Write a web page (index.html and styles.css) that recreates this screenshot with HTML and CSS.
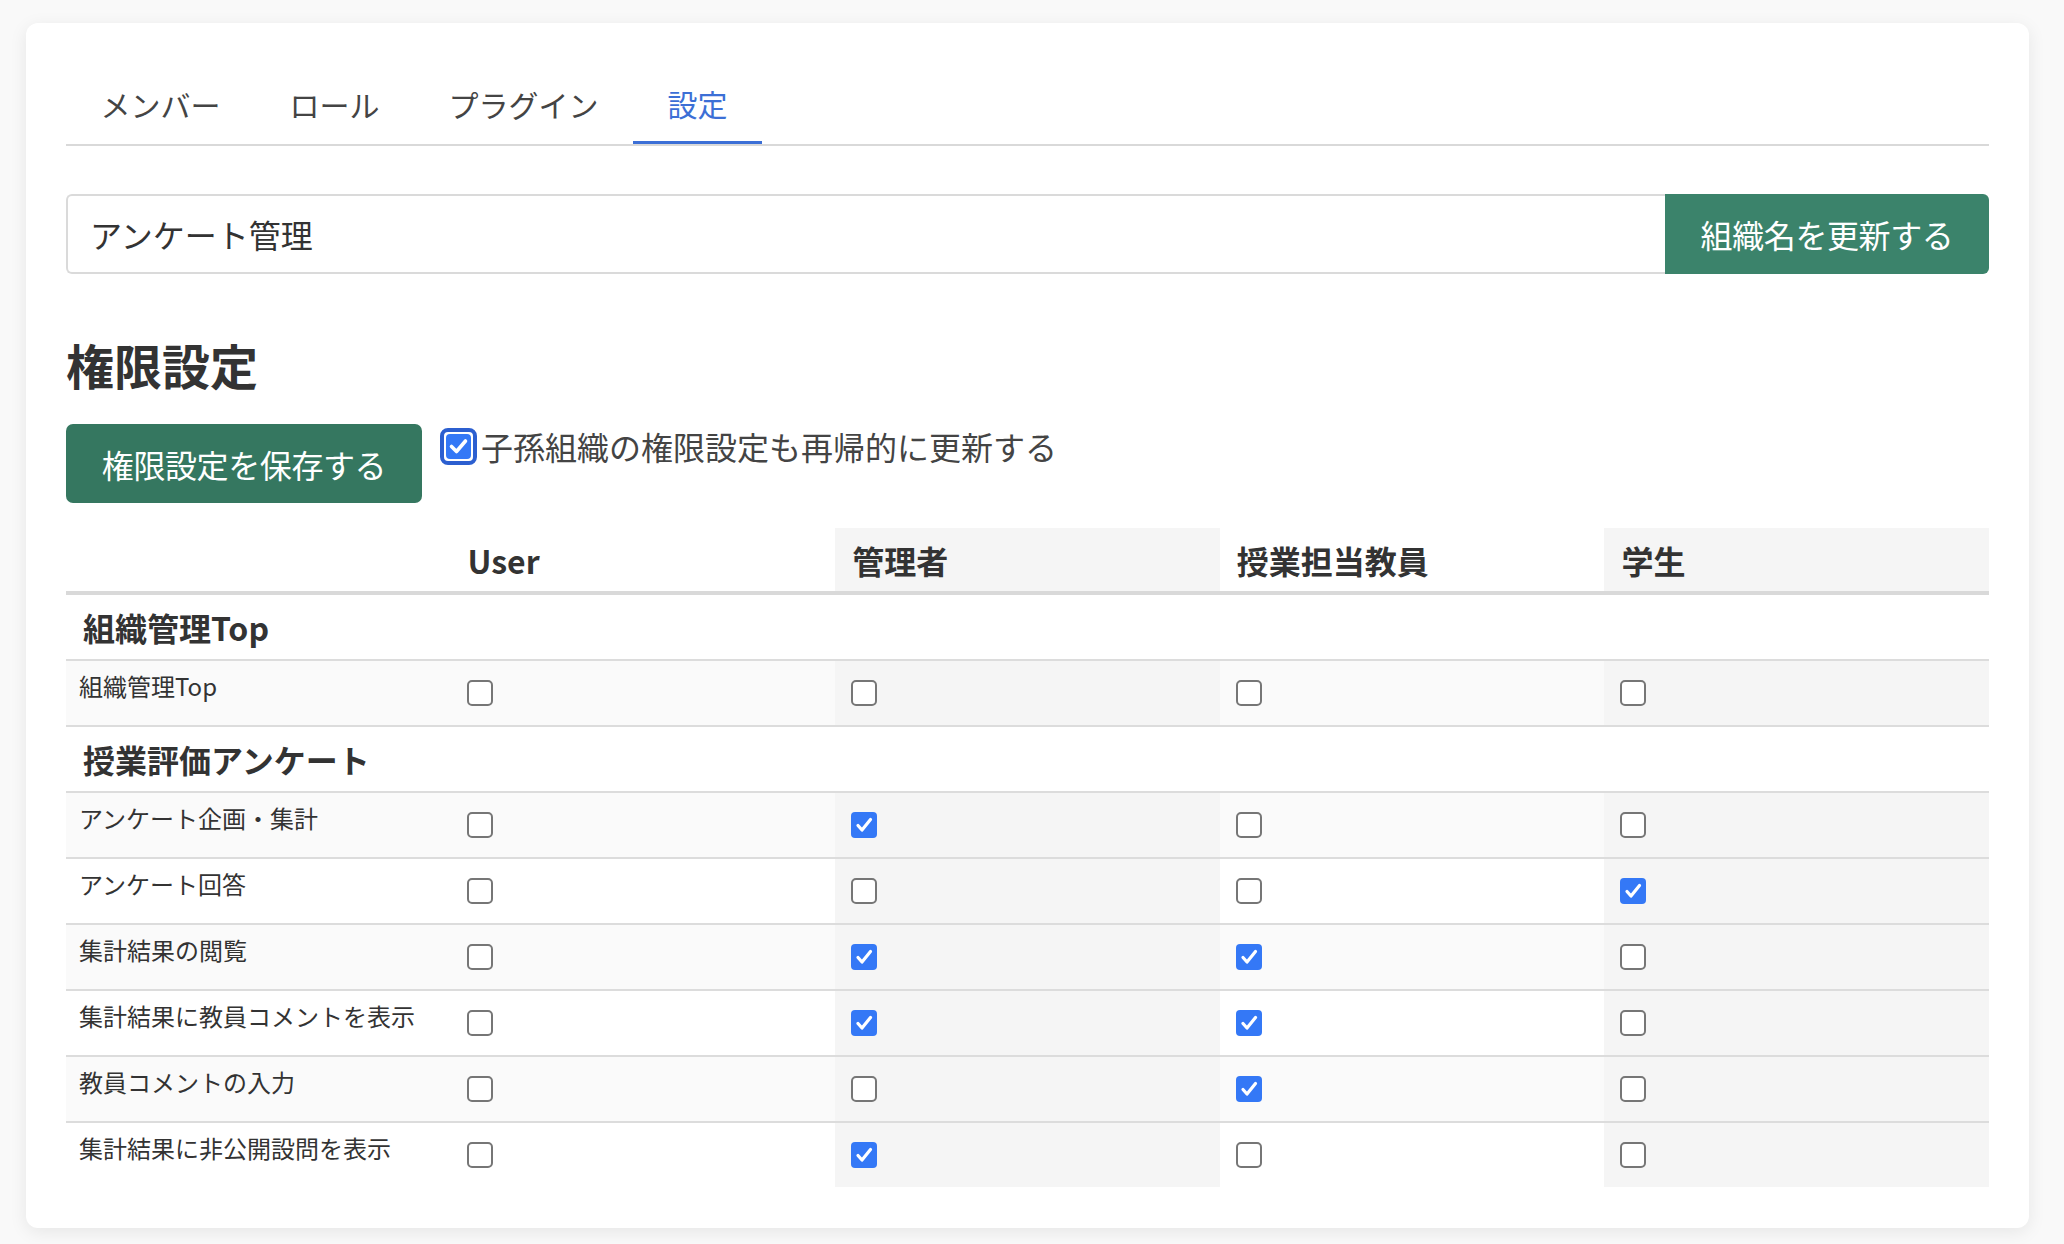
FILE: index.html
```html
<!DOCTYPE html>
<html lang="ja">
<head>
<meta charset="utf-8">
<title>設定</title>
<link rel="stylesheet" href="styles.css">
</head>
<body>
<div class="page">
  <div class="card">
    <nav class="tabs">
      <div class="tab">メンバー</div>
      <div class="tab">ロール</div>
      <div class="tab">プラグイン</div>
      <div class="tab active">設定</div>
    </nav>

    <div class="name-form">
      <div class="name-input">アンケート管理</div>
      <div class="btn btn-update">組織名を更新する</div>
    </div>

    <h2 class="heading">権限設定</h2>

    <div class="save-row">
      <div class="btn btn-save">権限設定を保存する</div>
      <label class="recursive">
        <svg class="focus-cb" width="37" height="37" viewBox="0 0 37 37">
          <rect x="2" y="2" width="33" height="33" rx="6" fill="#fff" stroke="#2c5fd0" stroke-width="4"/>
          <rect x="6" y="6" width="25" height="25" rx="4" fill="#3478f6"/>
          <path d="M11.5 18.5 L16.5 23.5 L25.5 13" fill="none" stroke="#fff" stroke-width="3.6" stroke-linecap="round" stroke-linejoin="round"/>
        </svg>
        <span>子孫組織の権限設定も再帰的に更新する</span>
      </label>
    </div>

    <table class="perm">
      <thead>
        <tr>
          <th></th>
          <th>User</th>
          <th class="alt">管理者</th>
          <th>授業担当教員</th>
          <th class="alt">学生</th>
        </tr>
      </thead>
      <tbody>
        <tr class="section"><th colspan="5">組織管理Top</th></tr>
        <tr class="row">
          <td class="name">組織管理Top</td>
          <td><span class="cb"></span></td>
          <td class="alt"><span class="cb"></span></td>
          <td><span class="cb"></span></td>
          <td class="alt"><span class="cb"></span></td>
        </tr>
      </tbody>
      <tbody>
        <tr class="section"><th colspan="5">授業評価アンケート</th></tr>
        <tr class="row">
          <td class="name">アンケート企画・集計</td>
          <td><span class="cb"></span></td>
          <td class="alt"><span class="cb on"><svg viewBox="0 0 26 26"><path d="M7 13.5 L11 18 L19.5 7.5" fill="none" stroke="#fff" stroke-width="3.2" stroke-linecap="round" stroke-linejoin="round"/></svg></span></td>
          <td><span class="cb"></span></td>
          <td class="alt"><span class="cb"></span></td>
        </tr>
        <tr class="row">
          <td class="name">アンケート回答</td>
          <td><span class="cb"></span></td>
          <td class="alt"><span class="cb"></span></td>
          <td><span class="cb"></span></td>
          <td class="alt"><span class="cb on"><svg viewBox="0 0 26 26"><path d="M7 13.5 L11 18 L19.5 7.5" fill="none" stroke="#fff" stroke-width="3.2" stroke-linecap="round" stroke-linejoin="round"/></svg></span></td>
        </tr>
        <tr class="row">
          <td class="name">集計結果の閲覧</td>
          <td><span class="cb"></span></td>
          <td class="alt"><span class="cb on"><svg viewBox="0 0 26 26"><path d="M7 13.5 L11 18 L19.5 7.5" fill="none" stroke="#fff" stroke-width="3.2" stroke-linecap="round" stroke-linejoin="round"/></svg></span></td>
          <td><span class="cb on"><svg viewBox="0 0 26 26"><path d="M7 13.5 L11 18 L19.5 7.5" fill="none" stroke="#fff" stroke-width="3.2" stroke-linecap="round" stroke-linejoin="round"/></svg></span></td>
          <td class="alt"><span class="cb"></span></td>
        </tr>
        <tr class="row">
          <td class="name">集計結果に教員コメントを表示</td>
          <td><span class="cb"></span></td>
          <td class="alt"><span class="cb on"><svg viewBox="0 0 26 26"><path d="M7 13.5 L11 18 L19.5 7.5" fill="none" stroke="#fff" stroke-width="3.2" stroke-linecap="round" stroke-linejoin="round"/></svg></span></td>
          <td><span class="cb on"><svg viewBox="0 0 26 26"><path d="M7 13.5 L11 18 L19.5 7.5" fill="none" stroke="#fff" stroke-width="3.2" stroke-linecap="round" stroke-linejoin="round"/></svg></span></td>
          <td class="alt"><span class="cb"></span></td>
        </tr>
        <tr class="row">
          <td class="name">教員コメントの入力</td>
          <td><span class="cb"></span></td>
          <td class="alt"><span class="cb"></span></td>
          <td><span class="cb on"><svg viewBox="0 0 26 26"><path d="M7 13.5 L11 18 L19.5 7.5" fill="none" stroke="#fff" stroke-width="3.2" stroke-linecap="round" stroke-linejoin="round"/></svg></span></td>
          <td class="alt"><span class="cb"></span></td>
        </tr>
        <tr class="row last">
          <td class="name">集計結果に非公開設問を表示</td>
          <td><span class="cb"></span></td>
          <td class="alt"><span class="cb on"><svg viewBox="0 0 26 26"><path d="M7 13.5 L11 18 L19.5 7.5" fill="none" stroke="#fff" stroke-width="3.2" stroke-linecap="round" stroke-linejoin="round"/></svg></span></td>
          <td><span class="cb"></span></td>
          <td class="alt"><span class="cb"></span></td>
        </tr>
      </tbody>
    </table>
  </div>
</div>
</body>
</html>
```

FILE: styles.css
```css
* { box-sizing: border-box; }

html, body {
  margin: 0;
  padding: 0;
}

body {
  background: #f9f9f9;
  font-family: "Noto Sans CJK JP", "Noto Sans", sans-serif;
  color: #333;
  font-size: 32px;
}

.page {
  padding: 23px 35px 18px 26px;
}

.card {
  background: #fff;
  border-radius: 12px;
  box-shadow: 0 4px 18px rgba(0, 0, 0, 0.08);
  padding: 40px 40px 41px 40px;
}

/* Tabs */
.tabs {
  display: flex;
  border-bottom: 2px solid #d9d9d9;
}

.tab {
  height: 81px;
  padding: 0 34.5px;
  display: flex;
  align-items: center;
  font-size: 30px;
  line-height: 30px;
  color: #444;
}

.tab.active {
  color: #3c6fd6;
  border-bottom: 3px solid #3c6fd6;
  margin-bottom: -2px;
  padding-top: 2px;
}

/* Name form */
.name-form {
  display: flex;
  margin-top: 48px;
  height: 80px;
}

.name-input {
  flex: 1;
  border: 2px solid #dadada;
  border-right: none;
  border-radius: 6px 0 0 6px;
  padding: 0 22px;
  display: flex;
  align-items: center;
  font-size: 32px;
  color: #333;
}

.btn {
  display: flex;
  align-items: center;
  justify-content: center;
  color: #fff;
  font-size: 32px;
  letter-spacing: -0.4px;
}

.btn-update {
  width: 324px;
  background: #3b836b;
  border-radius: 0 6px 6px 0;
}

/* Heading */
.heading {
  margin: 62px 0 0 0;
  font-size: 48px;
  line-height: 56px;
  font-weight: 700;
  color: #333;
}

/* Save row */
.save-row {
  display: flex;
  align-items: flex-start;
  margin-top: 32px;
}

.btn-save {
  width: 356px;
  height: 79px;
  background: #357760;
  border-radius: 7px;
}

.recursive {
  display: flex;
  align-items: center;
  margin-left: 18px;
  margin-top: 4px;
  font-size: 32px;
  line-height: 37px;
  color: #444;
}

.focus-cb {
  display: block;
  margin-right: 4px;
}

/* Table */
.perm {
  margin-top: 25px;
  width: 100%;
  table-layout: fixed;
  border-collapse: collapse;
}

.perm thead th {
  height: 65px;
  padding: 0 17px;
  text-align: left;
  vertical-align: middle;
  font-size: 32px;
  font-weight: 700;
  color: #333;
  border-bottom: 4px solid #d9d9d9;
}

.perm thead th.alt {
  background: #f5f5f5;
}

.perm tr.section th {
  padding: 12px 17px 12px 17px;
  line-height: 40px;
  text-align: left;
  font-size: 32px;
  font-weight: 700;
  color: #333;
  border-bottom: 2px solid #dcdcdc;
  background: #fff;
}

.perm tr.row td {
  vertical-align: top;
  padding: 19px 16px 19px 16px;
  border-bottom: 2px solid #dcdcdc;
}

.perm tr.row.last td {
  border-bottom: none;
}

.perm tr.row:nth-child(even) td {
  background: #fafafa;
}

.perm tr.row td.alt {
  background: #f5f5f5;
}

.perm tr.row td.name {
  padding: 5px 13px 20px 13px;
  font-size: 24px;
  line-height: 39px;
  color: #333;
}

.cb {
  display: block;
  width: 26px;
  height: 26px;
  border: 2px solid #767676;
  border-radius: 5px;
  background: #fff;
}

.cb.on {
  border: none;
  background: #3478f6;
  border-radius: 4px;
}

.cb svg {
  display: block;
  width: 26px;
  height: 26px;
}
```
